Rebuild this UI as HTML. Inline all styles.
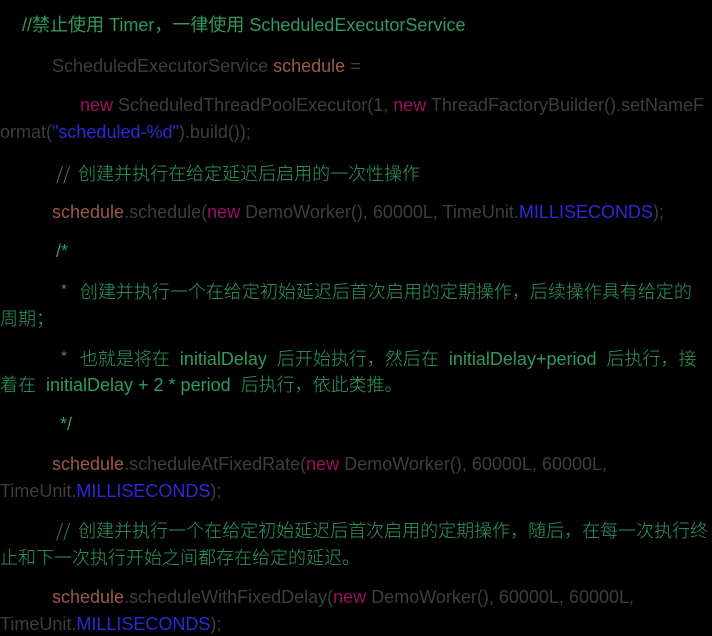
<!DOCTYPE html>
<html><head><meta charset="utf-8"><style>
html,body{margin:0;padding:0;background:#000;width:712px;height:636px;overflow:hidden}
.l{position:absolute;white-space:nowrap;font-family:"Liberation Sans","Noto Sans CJK SC",sans-serif;font-size:18px;line-height:20px;color:#3e3e3e}
.c{color:#2f9a5e}
.cj{color:#2f9a5e;font-family:"Noto Sans CJK SC",sans-serif;font-weight:300}
.e{color:#2f9a5e;font-family:"Liberation Sans",sans-serif;font-weight:normal;margin:0 6px}
.s{color:#9c5848}
.n{color:#9b1060}
.b{color:#2a2ad8}
</style></head><body>
<div class="l c" style="left:22px;top:15px">//禁止使用 Timer，一律使用 ScheduledExecutorService</div>
<div class="l" style="left:52px;top:56px">ScheduledExecutorService <span class="s">schedule</span> =</div>
<div class="l" style="left:80px;top:95px"><span class="n">new</span> ScheduledThreadPoolExecutor(1, <span class="n">new</span> ThreadFactoryBuilder().setNameF</div>
<div class="l" style="left:0;top:122px">ormat(<span class="b">"scheduled-%d"</span>).build());</div>
<div class="l cj" style="left:56px;top:163px">//&nbsp; 创建并执行在给定延迟后启用的一次性操作</div>
<div class="l" style="left:52px;top:202px"><span class="s">schedule</span>.schedule(<span class="n">new</span> DemoWorker(), 60000L, TimeUnit.<span class="b">MILLISECONDS</span>);</div>
<div class="l c" style="left:56px;top:241px">/*</div>
<div class="l cj" style="left:60px;top:281px">*&nbsp;&nbsp; 创建并执行一个在给定初始延迟后首次启用的定期操作，后续操作具有给定的</div>
<div class="l cj" style="left:0;top:308px">周期；</div>
<div class="l cj" style="left:60px;top:348px">*&nbsp;&nbsp; 也就是将在 <span class="e">initialDelay</span> 后开始执行，然后在 <span class="e">initialDelay+period</span> 后执行，接</div>
<div class="l cj" style="left:0;top:374px">着在 <span class="e">initialDelay + 2 * period</span> 后执行，依此类推。</div>
<div class="l c" style="left:60px;top:414px">*/</div>
<div class="l" style="left:52px;top:454px"><span class="s">schedule</span>.scheduleAtFixedRate(<span class="n">new</span> DemoWorker(), 60000L, 60000L,</div>
<div class="l" style="left:0;top:481px">TimeUnit.<span class="b">MILLISECONDS</span>);</div>
<div class="l cj" style="left:56px;top:520px">//&nbsp; 创建并执行一个在给定初始延迟后首次启用的定期操作，随后，在每一次执行终</div>
<div class="l cj" style="left:0;top:547px">止和下一次执行开始之间都存在给定的延迟。</div>
<div class="l" style="left:52px;top:587px"><span class="s">schedule</span>.scheduleWithFixedDelay(<span class="n">new</span> DemoWorker(), 60000L, 60000L,</div>
<div class="l" style="left:0;top:614px">TimeUnit.<span class="b">MILLISECONDS</span>);</div>
</body></html>
